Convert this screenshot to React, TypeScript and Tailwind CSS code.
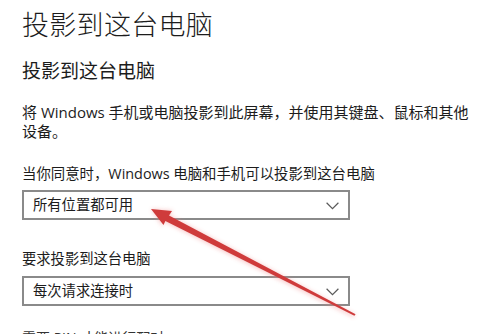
const FONT = {
  fontFamily: '"Open Sans", "Noto Sans CJK SC", sans-serif',
};

type SelectBoxProps = {
  value: string;
  className?: string;
};

function SelectBox({ value, className = "" }: SelectBoxProps) {
  return (
    <div
      className={`flex items-center justify-between w-[328px] h-[30px] border-2 border-[#8a8a8a] bg-white pl-[9px] pr-[9px] ${className}`}
    >
      <span className="text-[14.3px] leading-[20px] text-[#1c1c1c]">{value}</span>
      <svg width="13" height="8" viewBox="0 0 13 8" fill="none" className="mt-[1px]">
        <polyline points="0.6,0.8 6.5,6.6 12.4,0.8" stroke="#5a5a5a" strokeWidth="1.2" />
      </svg>
    </div>
  );
}

// red annotation arrow drawn over the settings page
function RedArrow() {
  return (
    <svg
      className="absolute left-0 top-0 pointer-events-none"
      width="500"
      height="334"
      viewBox="0 0 500 334"
    >
      <defs>
        <filter id="glow" x="-20%" y="-20%" width="140%" height="140%">
          <feGaussianBlur stdDeviation="2.2" />
        </filter>
      </defs>
      <g filter="url(#glow)" opacity="0.45">
        <polygon
          points="151,209 173,210.5 169,215 356,315 353,317 163,221 163,227"
          fill="#f08a8a"
        />
      </g>
      <polygon
        points="151,209 172,211 169,215.5 355.6,314.2 354.4,315.8 165.4,221 163.5,225"
        fill="#cf3b3b"
      />
    </svg>
  );
}

export default function App() {
  return (
    <div
      className="relative w-[500px] h-[334px] overflow-hidden bg-white text-[#1c1c1c]"
      style={FONT}
    >
      <div className="flex flex-col pl-[22px] pt-[7px]">
        <h1 className="text-[27px] leading-[36px] font-light tracking-[0.3px]">
          投影到这台电脑
        </h1>
        <h2 className="mt-[15px] text-[19px] leading-[26px] font-normal">
          投影到这台电脑
        </h2>
        <p className="mt-[19px] w-[456px] text-[15px] leading-[19px]">
          将 Windows 手机或电脑投影到此屏幕，并使用其键盘、鼠标和其他设备。
        </p>
        <div className="mt-[23px] text-[14.4px] leading-[20px]">
          当你同意时，Windows 电脑和手机可以投影到这台电脑
        </div>
        <SelectBox value="所有位置都可用" className="mt-[6px]" />
        <div className="mt-[29px] text-[14.3px] leading-[20px]">
          要求投影到这台电脑
        </div>
        <SelectBox value="每次请求连接时" className="mt-[7px]" />
        <div className="mt-[22px] text-[14px] leading-[20px] text-[#333]">
          需要 PIN 才能进行配对
        </div>
      </div>
      <RedArrow />
    </div>
  );
}
